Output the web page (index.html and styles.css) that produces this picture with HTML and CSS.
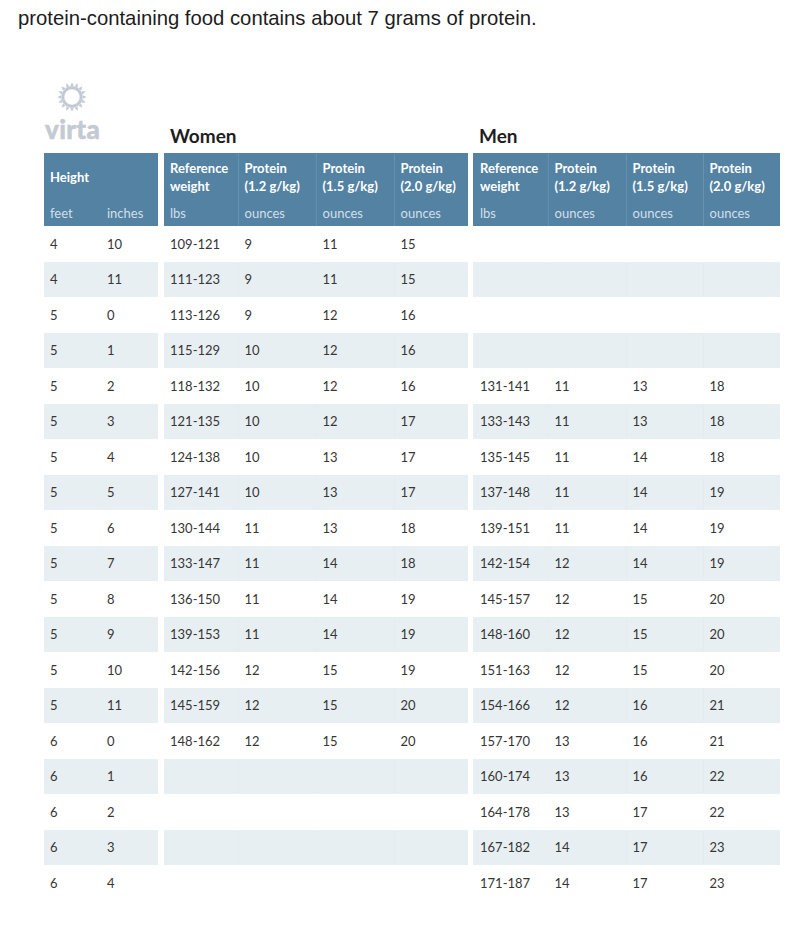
FILE: index.html
```html
<!DOCTYPE html>
<html lang="en">
<head>
<meta charset="utf-8">
<title>Protein by height</title>
<link rel="stylesheet" href="styles.css">
</head>
<body>
<p class="intro">protein-containing food contains about 7 grams of protein.</p>

<div class="chart">
  <div class="group group-height">
    <div class="head brand">
      <svg class="sun" width="32" height="32" viewBox="0 0 32 32" aria-hidden="true">
        <defs><path id="tooth" d="M14.2 5.2 L17.8 5.2 L16 1.2 Z"/></defs>
        <circle cx="16" cy="16" r="9.2" fill="none" stroke="#c4cad3" stroke-width="3"/>
        <g fill="#c4cad3">
          <use href="#tooth" transform="rotate(0 16 16)"/>
          <use href="#tooth" transform="rotate(22.5 16 16)"/>
          <use href="#tooth" transform="rotate(45 16 16)"/>
          <use href="#tooth" transform="rotate(67.5 16 16)"/>
          <use href="#tooth" transform="rotate(90 16 16)"/>
          <use href="#tooth" transform="rotate(112.5 16 16)"/>
          <use href="#tooth" transform="rotate(135 16 16)"/>
          <use href="#tooth" transform="rotate(157.5 16 16)"/>
          <use href="#tooth" transform="rotate(180 16 16)"/>
          <use href="#tooth" transform="rotate(202.5 16 16)"/>
          <use href="#tooth" transform="rotate(225 16 16)"/>
          <use href="#tooth" transform="rotate(247.5 16 16)"/>
          <use href="#tooth" transform="rotate(270 16 16)"/>
          <use href="#tooth" transform="rotate(292.5 16 16)"/>
          <use href="#tooth" transform="rotate(315 16 16)"/>
          <use href="#tooth" transform="rotate(337.5 16 16)"/>
        </g>
      </svg>
      <span class="wordmark">virta</span>
    </div>
    <table class="tbl tbl-height">
      <colgroup><col class="w57"><col class="w57"></colgroup>
      <thead>
        <tr class="hrow"><th colspan="2">Height</th></tr>
        <tr class="srow"><th>feet</th><th>inches</th></tr>
      </thead>
      <tbody>
        <tr><td>4</td><td>10</td></tr>
        <tr><td>4</td><td>11</td></tr>
        <tr><td>5</td><td>0</td></tr>
        <tr><td>5</td><td>1</td></tr>
        <tr><td>5</td><td>2</td></tr>
        <tr><td>5</td><td>3</td></tr>
        <tr><td>5</td><td>4</td></tr>
        <tr><td>5</td><td>5</td></tr>
        <tr><td>5</td><td>6</td></tr>
        <tr><td>5</td><td>7</td></tr>
        <tr><td>5</td><td>8</td></tr>
        <tr><td>5</td><td>9</td></tr>
        <tr><td>5</td><td>10</td></tr>
        <tr><td>5</td><td>11</td></tr>
        <tr><td>6</td><td>0</td></tr>
        <tr><td>6</td><td>1</td></tr>
        <tr><td>6</td><td>2</td></tr>
        <tr><td>6</td><td>3</td></tr>
        <tr><td>6</td><td>4</td></tr>
      </tbody>
    </table>
  </div>

  <div class="group group-women">
    <div class="head"><h2>Women</h2></div>
    <table class="tbl tbl-women">
      <colgroup><col class="w74"><col class="w78"><col class="w78"><col class="w74"></colgroup>
      <thead>
        <tr class="hrow"><th>Reference<br>weight</th><th>Protein<br>(1.2 g/kg)</th><th>Protein<br>(1.5 g/kg)</th><th>Protein<br>(2.0 g/kg)</th></tr>
        <tr class="srow"><th>lbs</th><th>ounces</th><th>ounces</th><th>ounces</th></tr>
      </thead>
      <tbody>
        <tr><td>109-121</td><td>9</td><td>11</td><td>15</td></tr>
        <tr><td>111-123</td><td>9</td><td>11</td><td>15</td></tr>
        <tr><td>113-126</td><td>9</td><td>12</td><td>16</td></tr>
        <tr><td>115-129</td><td>10</td><td>12</td><td>16</td></tr>
        <tr><td>118-132</td><td>10</td><td>12</td><td>16</td></tr>
        <tr><td>121-135</td><td>10</td><td>12</td><td>17</td></tr>
        <tr><td>124-138</td><td>10</td><td>13</td><td>17</td></tr>
        <tr><td>127-141</td><td>10</td><td>13</td><td>17</td></tr>
        <tr><td>130-144</td><td>11</td><td>13</td><td>18</td></tr>
        <tr><td>133-147</td><td>11</td><td>14</td><td>18</td></tr>
        <tr><td>136-150</td><td>11</td><td>14</td><td>19</td></tr>
        <tr><td>139-153</td><td>11</td><td>14</td><td>19</td></tr>
        <tr><td>142-156</td><td>12</td><td>15</td><td>19</td></tr>
        <tr><td>145-159</td><td>12</td><td>15</td><td>20</td></tr>
        <tr><td>148-162</td><td>12</td><td>15</td><td>20</td></tr>
        <tr><td></td><td></td><td></td><td></td></tr>
        <tr><td></td><td></td><td></td><td></td></tr>
        <tr><td></td><td></td><td></td><td></td></tr>
        <tr><td></td><td></td><td></td><td></td></tr>
      </tbody>
    </table>
  </div>

  <div class="group group-men">
    <div class="head"><h2>Men</h2></div>
    <table class="tbl tbl-men">
      <colgroup><col class="w75"><col class="w78"><col class="w77"><col class="w77"></colgroup>
      <thead>
        <tr class="hrow"><th>Reference<br>weight</th><th>Protein<br>(1.2 g/kg)</th><th>Protein<br>(1.5 g/kg)</th><th>Protein<br>(2.0 g/kg)</th></tr>
        <tr class="srow"><th>lbs</th><th>ounces</th><th>ounces</th><th>ounces</th></tr>
      </thead>
      <tbody>
        <tr><td></td><td></td><td></td><td></td></tr>
        <tr><td></td><td></td><td></td><td></td></tr>
        <tr><td></td><td></td><td></td><td></td></tr>
        <tr><td></td><td></td><td></td><td></td></tr>
        <tr><td>131-141</td><td>11</td><td>13</td><td>18</td></tr>
        <tr><td>133-143</td><td>11</td><td>13</td><td>18</td></tr>
        <tr><td>135-145</td><td>11</td><td>14</td><td>18</td></tr>
        <tr><td>137-148</td><td>11</td><td>14</td><td>19</td></tr>
        <tr><td>139-151</td><td>11</td><td>14</td><td>19</td></tr>
        <tr><td>142-154</td><td>12</td><td>14</td><td>19</td></tr>
        <tr><td>145-157</td><td>12</td><td>15</td><td>20</td></tr>
        <tr><td>148-160</td><td>12</td><td>15</td><td>20</td></tr>
        <tr><td>151-163</td><td>12</td><td>15</td><td>20</td></tr>
        <tr><td>154-166</td><td>12</td><td>16</td><td>21</td></tr>
        <tr><td>157-170</td><td>13</td><td>16</td><td>21</td></tr>
        <tr><td>160-174</td><td>13</td><td>16</td><td>22</td></tr>
        <tr><td>164-178</td><td>13</td><td>17</td><td>22</td></tr>
        <tr><td>167-182</td><td>14</td><td>17</td><td>23</td></tr>
        <tr><td>171-187</td><td>14</td><td>17</td><td>23</td></tr>
      </tbody>
    </table>
  </div>
</div>
</body>
</html>
```

FILE: styles.css
```css
html, body {
  margin: 0;
  padding: 0;
  background: #ffffff;
}

.intro {
  margin: 0;
  padding: 6.5px 0 0 18px;
  font-family: "Liberation Sans", Arial, sans-serif;
  font-size: 20.3px;
  line-height: 23px;
  color: #1c1c1c;
}

.chart {
  display: flex;
  align-items: flex-start;
  margin: 46px 0 0 44px;
  font-family: Lato, "Open Sans", sans-serif;
}

.group {
  display: flex;
  flex-direction: column;
}

.group-women { margin-left: 6px; }
.group-men { margin-left: 5px; }

.head {
  height: 77.5px;
  display: flex;
  flex-direction: column;
  justify-content: flex-end;
}

.head h2 {
  margin: 0 0 6px 6px;
  font-size: 19px;
  line-height: 22px;
  font-weight: 700;
  color: #1e1e1e;
}

.brand {
  align-items: flex-start;
}

.sun {
  display: block;
  margin: 0 0 3px 12px;
}

.wordmark {
  display: block;
  margin: 0 0 11px 1px;
  font-size: 26px;
  line-height: 26px;
  font-weight: 900;
  letter-spacing: 0.3px;
  color: #c4cad3;
  -webkit-text-stroke: 0.5px #c4cad3;
}

.tbl {
  border-collapse: collapse;
  table-layout: fixed;
}

.tbl-height { width: 114px; }
.tbl-women { width: 304px; }
.tbl-men { width: 307px; }

.w57 { width: 57px; }
.w74 { width: 74px; }
.w75 { width: 75px; }
.w77 { width: 77px; }
.w78 { width: 78px; }

.tbl th {
  background: #5382a3;
  text-align: left;
  vertical-align: middle;
  padding: 0 0 0 6px;
  font-size: 13px;
  white-space: nowrap;
}

.hrow th {
  height: 47px;
  line-height: 18px;
  font-weight: 700;
  color: #ffffff;
}

.srow th {
  height: 26px;
  line-height: 16px;
  font-weight: 400;
  color: #d2dfe8;
}

.tbl-women th + th,
.tbl-men th + th {
  border-left: 1px solid #6590ae;
}

.tbl td {
  height: 35.5px;
  padding: 0 0 0 6px;
  font-size: 13px;
  line-height: 16px;
  color: #363636;
  vertical-align: middle;
  white-space: nowrap;
}

.tbl-women td + td,
.tbl-men td + td {
  border-left: 1px solid transparent;
}

.tbl tbody tr:nth-child(even) td {
  background: #e8eff3;
}

.tbl-women tbody tr:nth-child(even) td + td,
.tbl-men tbody tr:nth-child(even) td + td {
  border-left-color: #e5ecf0;
}

.tbl-men th:first-child,
.tbl-men td:first-child {
  padding-left: 7px;
}
```
